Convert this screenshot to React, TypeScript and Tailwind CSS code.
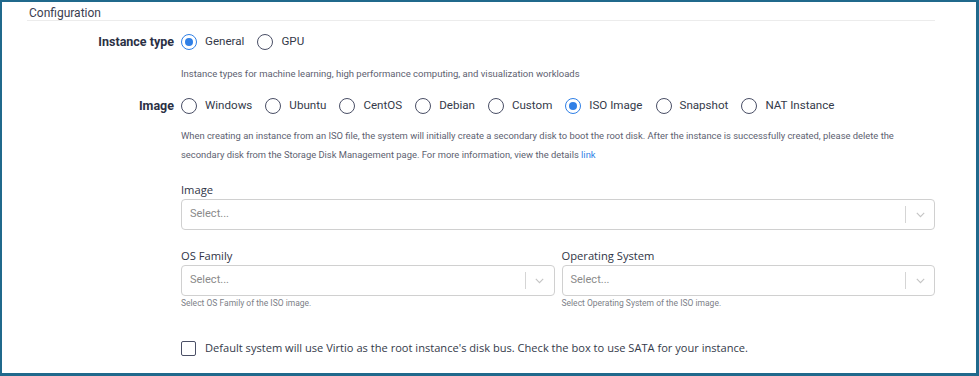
import React from "react";

const roboto = { fontFamily: "Roboto, 'Liberation Sans', sans-serif" };
const open = { fontFamily: "'Open Sans', 'Liberation Sans', sans-serif" };

function Radio({ label, checked }: { label: string; checked?: boolean }) {
  return (
    <label className="flex items-center mr-[13px]">
      <span
        className={
          "w-[16px] h-[16px] rounded-full flex items-center justify-center border-[1.5px] " +
          (checked ? "border-[#2f7fe6]" : "border-[#4a4f66]")
        }
      >
        {checked && <span className="w-[8px] h-[8px] rounded-full bg-[#2f7fe6]" />}
      </span>
      <span className="ml-[8px] text-[11.6px] text-[#343a4a] whitespace-nowrap" style={roboto}>
        {label}
      </span>
    </label>
  );
}

function Select() {
  return (
    <div className="h-[31px] border border-[#d0d0d0] rounded-[4px] flex items-center pl-[8px]">
      <span className="flex-1 text-[11px] text-[#8a8a8a]" style={roboto}>
        Select...
      </span>
      <span className="w-px h-[17px] bg-[#d5d5d5]" />
      <span className="w-[28px] flex items-center justify-center">
        <svg width="9" height="6" viewBox="0 0 9 6" fill="none">
          <path d="M0.8 0.8 L4.5 4.6 L8.2 0.8" stroke="#c4c4c4" strokeWidth="1.1" />
        </svg>
      </span>
    </div>
  );
}

export default function App() {
  return (
    <div className="w-[979px] h-[376px] bg-white border-[#20698c] border-l-2 border-t-2 border-r-[3px] border-b-[3px] pl-[25px] pr-[41px] overflow-hidden">
      <div className="pl-[2px] pt-[2px] h-[18px] text-[12px] text-[#3b4050] leading-[18px]" style={roboto}>
        Configuration
      </div>
      <div className="h-px bg-[#ececec]" />
      <div className="pl-[2px]">
        {/* Instance type */}
        <div className="flex items-center mt-[12px] h-[18px]">
          <div className="w-[145px] text-right text-[12.5px] font-bold text-[#2b3044]" style={roboto}>
            Instance type
          </div>
          <div className="ml-[7px] flex items-center">
            <Radio label="General" checked />
            <Radio label="GPU" />
          </div>
        </div>
        <div className="ml-[152px] mt-[17px] text-[9.5px] leading-[12px] text-[#5d6170]" style={roboto}>
          Instance types for machine learning, high performance computing, and visualization workloads
        </div>
        {/* Image */}
        <div className="flex items-center mt-[17px] h-[18px]">
          <div className="w-[145px] text-right text-[12.5px] font-bold text-[#2b3044]" style={roboto}>
            Image
          </div>
          <div className="ml-[7px] flex items-center">
            <Radio label="Windows" />
            <Radio label="Ubuntu" />
            <Radio label="CentOS" />
            <Radio label="Debian" />
            <Radio label="Custom" />
            <Radio label="ISO Image" checked />
            <Radio label="Snapshot" />
            <Radio label="NAT Instance" />
          </div>
        </div>
        <div className="ml-[152px] mt-[11px] text-[9.4px] leading-[19px] text-[#5d6170] whitespace-nowrap" style={roboto}>
          When creating an instance from an ISO file, the system will initially create a secondary disk to boot the root disk. After the instance is successfully created, please delete the
          <br />
          secondary disk from the Storage Disk Management page. For more information, view the details{" "}
          <span className="text-[#2f7fe6]">link</span>
        </div>
        <div className="ml-[152px] mt-[17px]">
          <div className="text-[11.2px] leading-[17px] text-[#2f3446]" style={open}>
            Image
          </div>
          <div className="mt-[1px]">
            <Select />
          </div>
          <div className="mt-[17px] flex gap-[7px]">
            <div className="flex-1">
              <div className="text-[11.2px] leading-[17px] text-[#2f3446]" style={open}>
                OS Family
              </div>
              <div className="mt-[1px]">
                <Select />
              </div>
              <div className="mt-[1px] text-[8.5px] leading-[12px] text-[#7d7f88]" style={roboto}>
                Select OS Family of the ISO image.
              </div>
            </div>
            <div className="flex-1">
              <div className="text-[11.2px] leading-[17px] text-[#2f3446]" style={open}>
                Operating System
              </div>
              <div className="mt-[1px]">
                <Select />
              </div>
              <div className="mt-[1px] text-[8.5px] leading-[12px] text-[#7d7f88]" style={roboto}>
                Select Operating System of the ISO image.
              </div>
            </div>
          </div>
          <label className="mt-[31px] flex items-center">
            <span className="w-[15px] h-[15px] border-[1.5px] border-[#4a4f66] rounded-[2px]" />
            <span className="ml-[9px] text-[11.1px] text-[#343a4a] whitespace-nowrap" style={open}>
              Default system will use Virtio as the root instance's disk bus. Check the box to use SATA for your instance.
            </span>
          </label>
        </div>
      </div>
    </div>
  );
}
